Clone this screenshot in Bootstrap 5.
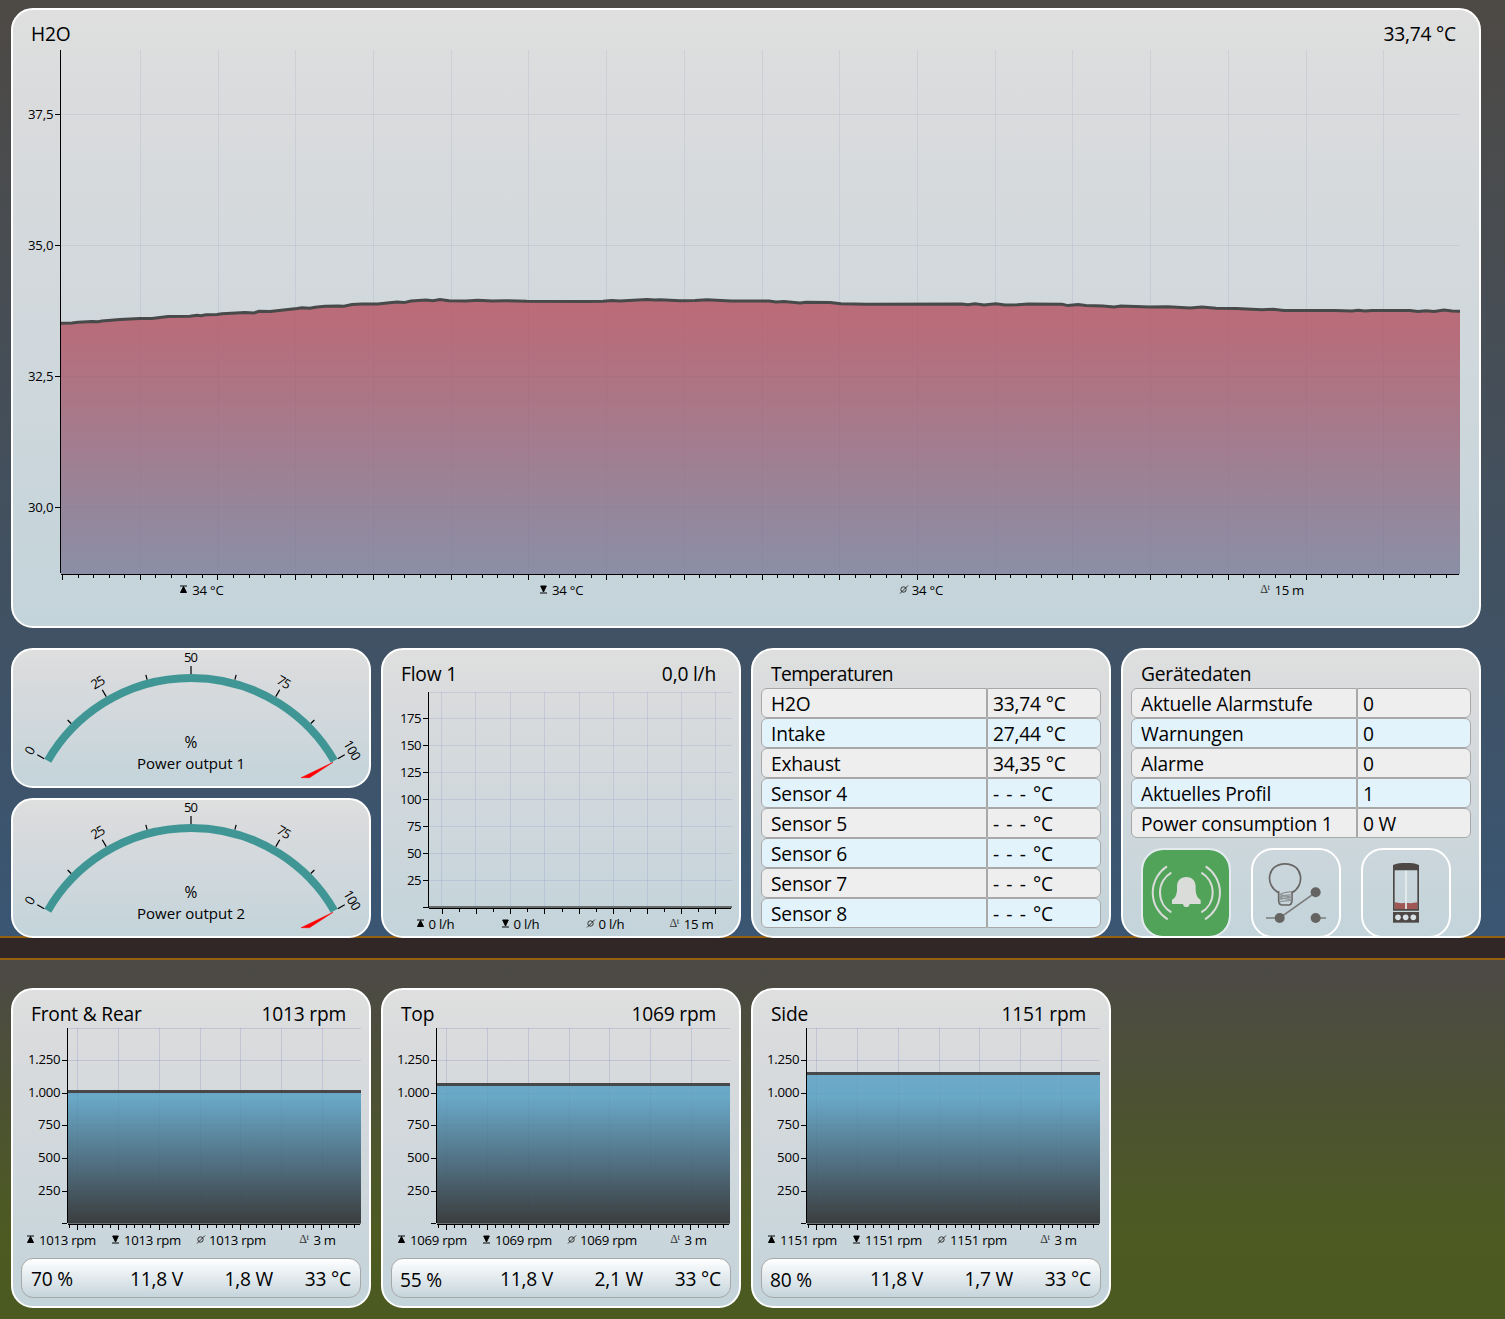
<!DOCTYPE html>
<html lang="de">
<head>
    <meta charset="UTF-8">
    <meta name="viewport" content="width=device-width, initial-scale=1.0">
    <title>H2O Monitor</title>
    <link href="https://cdn.jsdelivr.net/npm/bootstrap@5.3.0/dist/css/bootstrap.min.css" rel="stylesheet">
    <style>
        body {
            background: #312726;
            color: #000;
            font-family: "Open Sans", "Noto Sans", sans-serif;
            font-size: 19.2px;
            letter-spacing: -.2px;
            line-height: 30px;
            overflow: hidden;
        }
        svg { display: block; overflow: visible; }
        svg text { font-family: "Open Sans", "Noto Sans", sans-serif; letter-spacing: 0; }

        .zone { padding-left: 11px; }
        .zone-water {
            height: 938px;
            padding-top: 8px;
            border-bottom: 2px solid #96610f;
            background: linear-gradient(#4d4945, #3a5673);
        }
        .zone-fans {
            height: 361px;
            margin-top: 20px;
            padding-top: 28px;
            border-top: 2px solid #96610f;
            background: linear-gradient(#4c4946, #4d5a22 75%, #4b5a20);
        }

        .panel {
            width: 360px;
            border: 2px solid #fff;
            border-radius: 22px;
            background: linear-gradient(#dedfde, #dadbdd 15%, #cdd7dc 65%, #c3d4da);
        }
        .panel-wide { width: 1470px; height: 620px; }
        .panel-gauge { height: 140px; }
        .panel-std { height: 290px; }
        .panel-fan { height: 320px; }

        .panel-title {
            height: 38px;
            padding: 9px 23px 0 18px;
        }
        .title-tight { letter-spacing: -.6px; }

        .stats {
            display: grid;
            grid-template-columns: repeat(4, 1fr);
            padding: 0 6px 0 10px;
            font-size: 13.2px;
            letter-spacing: -.28px;
            line-height: 16px;
        }
        .stats-wide { padding: 0 18px 0 9px; margin-top: -1px; }
        .stats-fan { padding: 0 10px 0 6px; }
        .stats-left { padding: 0 9px 0 7px; }
        .stats > div { display: flex; justify-content: center; gap: 4px; white-space: nowrap; }
        .stats > div:last-child { gap: 5px; padding-left: 2px; }
        .stats svg { margin-top: 3px; }
        .delta { font-family: "Liberation Serif", serif; font-size: 12px; line-height: 14px; color: #333; letter-spacing: -.5px; }
        .delta sup { font-size: 9px; top: -.3em; }

        .val-table { padding: 0 8px; }
        .val-row > div { height: 30px; border: 1px solid #a8a8a8; background: #eee; white-space: pre; line-height: 30px; }
        .val-row:nth-child(even) > div { background: #e2f3fb; }
        .val-name { width: 226px; padding-left: 9px; border-radius: 6px 0 0 6px; }
        .val-num { width: 114px; padding-left: 5px; border-radius: 0 6px 6px 0; }
        .val-none { word-spacing: 2.6px; }

        /* the last row of tiles is cut at the panel's lower edge */
        .tile-row { height: 88px; overflow: hidden; gap: 20px; padding-left: 18px; margin-top: 10px; }
        .tile {
            width: 90px;
            height: 90px;
            border: 2px solid #fff;
            border-radius: 22px;
            flex: none;
        }
        .tile-alarm { background: #51a359; background-clip: padding-box; border-color: #e3ebee; }

        .info-bar {
            display: grid;
            grid-template-columns: 68px 84px 90px 78px;
            height: 40px;
            margin: 10px 8px 0;
            padding: 5px 9px;
            border: 1px solid #a8a8a8;
            border-radius: 12px;
            background: linear-gradient(#fff, #c5d5dc);
            text-align: right;
            white-space: nowrap;
        }
        .info-bar > :first-child { text-align: left; }
        .nudge > :first-child { margin-left: -1px; padding-top: 1px; }
    </style>
</head>
<body>
<svg width="0" height="0" class="position-absolute">
    <defs>
        <linearGradient id="fill-water" gradientUnits="userSpaceOnUse" x1="0" y1="300" x2="0" y2="574">
            <stop offset="0" stop-color="#bc6b78"/>
            <stop offset=".15" stop-color="#b66e7c"/>
            <stop offset="1" stop-color="#8a8fa6"/>
        </linearGradient>
        <linearGradient id="fill-fan" gradientUnits="userSpaceOnUse" x1="0" y1="1072" x2="0" y2="1223">
            <stop offset="0" stop-color="#6ea9c8"/>
            <stop offset=".17" stop-color="#69a8c7"/>
            <stop offset=".57" stop-color="#537487"/>
            <stop offset="1" stop-color="#3b3e3e"/>
        </linearGradient>
    </defs>
</svg>

<section class="zone zone-water">
    <div class="panel panel-wide">
        <div class="panel-title d-flex justify-content-between">
            <span>H2O</span><span>33,74 °C</span>
        </div>
        <div class="chart" data-chart="water"></div>
        <div class="stats stats-wide" data-max="34 °C" data-span="15 m"></div>
    </div>

    <div class="d-flex" style="gap: 10px; margin-top: 20px">
        <div class="d-flex flex-column" style="gap: 10px">
            <div class="panel panel-gauge" data-gauge="Power output 1"></div>
            <div class="panel panel-gauge" data-gauge="Power output 2"></div>
        </div>

        <div class="panel panel-std">
            <div class="panel-title d-flex justify-content-between">
                <span>Flow 1</span><span>0,0 l/h</span>
            </div>
            <div class="chart" data-chart="flow"></div>
            <div class="stats" data-max="0 l/h" data-span="15 m"></div>
        </div>

        <div class="panel panel-std">
            <div class="panel-title title-tight">Temperaturen</div>
            <div class="val-table">
                <div class="val-row d-flex"><div class="val-name">H2O</div><div class="val-num">33,74 °C</div></div>
                <div class="val-row d-flex"><div class="val-name">Intake</div><div class="val-num">27,44 °C</div></div>
                <div class="val-row d-flex"><div class="val-name">Exhaust</div><div class="val-num">34,35 °C</div></div>
                <div class="val-row d-flex"><div class="val-name">Sensor 4</div><div class="val-num val-none">- - - °C</div></div>
                <div class="val-row d-flex"><div class="val-name">Sensor 5</div><div class="val-num val-none">- - - °C</div></div>
                <div class="val-row d-flex"><div class="val-name">Sensor 6</div><div class="val-num val-none">- - - °C</div></div>
                <div class="val-row d-flex"><div class="val-name">Sensor 7</div><div class="val-num val-none">- - - °C</div></div>
                <div class="val-row d-flex"><div class="val-name">Sensor 8</div><div class="val-num val-none">- - - °C</div></div>
            </div>
        </div>

        <div class="panel panel-std">
            <div class="panel-title">Gerätedaten</div>
            <div class="val-table">
                <div class="val-row d-flex"><div class="val-name">Aktuelle Alarmstufe</div><div class="val-num">0</div></div>
                <div class="val-row d-flex"><div class="val-name">Warnungen</div><div class="val-num">0</div></div>
                <div class="val-row d-flex"><div class="val-name">Alarme</div><div class="val-num">0</div></div>
                <div class="val-row d-flex"><div class="val-name">Aktuelles Profil</div><div class="val-num">1</div></div>
                <div class="val-row d-flex"><div class="val-name">Power consumption 1</div><div class="val-num">0 W</div></div>
            </div>
            <div class="tile-row d-flex">
                <div class="tile tile-alarm">
                    <svg width="86" height="86" viewBox="0 0 258 258">
                        <g fill="none" stroke="#d9dcd9" stroke-width="6">
                            <path d="M72 49A94 94 0 0 0 74 208M85 68A69 69 0 0 0 85 187"/>
                            <path d="M188 49A94 94 0 0 1 186 208M175 68A69 69 0 0 1 175 187"/>
                        </g>
                        <path fill="#d9dcd9" d="M130 81C112 81 102 93 102 110V120C101 135 97 143 87 150V162H173V150C163 143 159 135 158 120V110C158 93 148 81 130 81Z"/>
                        <path fill="#d9dcd9" d="M120 161q1 10 10 10t10-10z"/>
                    </svg>
                </div>
                <div class="tile">
                    <svg width="86" height="86" viewBox="0 0 258 258">
                        <g fill="none" stroke="#686664" stroke-width="5">
                            <path d="M77 128C36 108 40 42 96 41.500C152 42 156 108 117 128"/>
                            <path d="M77 124V150Q77 164 86 165H108Q117 164 117 150V124"/>
                        </g>
                        <path fill="none" stroke="#8d9193" stroke-width="3.500" d="M78 134Q98 124 117 126M78 142Q98 134 117 134M78 149Q98 142 117 143M79 156Q98 151 116 152M78 134L117 142M78 142L117 150"/>
                        <path fill="none" stroke="#7c7b7a" stroke-width="5" d="M39 204H80L188 127M188 204H219"/>
                        <g fill="#666462">
                            <circle cx="80" cy="204" r="15"/>
                            <circle cx="188" cy="127" r="15"/>
                            <circle cx="188" cy="204" r="15"/>
                        </g>
                    </svg>
                </div>
                <div class="tile">
                    <svg width="86" height="86" viewBox="0 0 258 258">
                        <path fill="#a15656" d="M95 157l20 3 14-2 14 2 20-3v22H95z"/>
                        <path fill="#e6edf0" opacity=".85" d="M126 60h6v117h-6z"/>
                        <path fill="none" stroke="#4d4846" stroke-width="5" d="M92.500 58V179.500H165.500V58"/>
                        <path fill="#4d4846" d="M90 61V45Q104 39 117 39H142Q155 39 168 45V61Z"/>
                        <path fill="#4d4846" d="M90 186H168V218H90Z"/>
                        <g fill="#d7e1e6">
                            <circle cx="105" cy="202" r="8.500"/>
                            <circle cx="128" cy="202" r="8.500"/>
                            <circle cx="151" cy="202" r="8.500"/>
                        </g>
                    </svg>
                </div>
            </div>
        </div>
    </div>
</section>

<section class="zone zone-fans">
    <div class="d-flex" style="gap: 10px">
        <div class="panel panel-fan">
            <div class="panel-title d-flex justify-content-between">
                <span>Front &amp; Rear</span><span>1013 rpm</span>
            </div>
            <div class="chart" data-chart="fan" data-top="1091.5" data-shift="0"></div>
            <div class="stats stats-fan" data-max="1013 rpm" data-span="3 m"></div>
            <div class="info-bar"><span>70 %</span><span>11,8 V</span><span>1,8 W</span><span>33 °C</span></div>
        </div>
        <div class="panel panel-fan">
            <div class="panel-title d-flex justify-content-between">
                <span>Top</span><span>1069 rpm</span>
            </div>
            <div class="chart" data-chart="fan" data-top="1084.5" data-shift="-1"></div>
            <div class="stats stats-left" data-max="1069 rpm" data-span="3 m"></div>
            <div class="info-bar nudge"><span>55 %</span><span>11,8 V</span><span>2,1 W</span><span>33 °C</span></div>
        </div>
        <div class="panel panel-fan">
            <div class="panel-title d-flex justify-content-between">
                <span>Side</span><span>1151 rpm</span>
            </div>
            <div class="chart" data-chart="fan" data-top="1073.5" data-shift="-1"></div>
            <div class="stats stats-left" data-max="1151 rpm" data-span="3 m"></div>
            <div class="info-bar nudge"><span>80 %</span><span>11,8 V</span><span>1,7 W</span><span>33 °C</span></div>
        </div>
    </div>
</section>

<script src="https://cdn.jsdelivr.net/npm/bootstrap@5.3.0/dist/js/bootstrap.bundle.min.js"></script>
<script>
    const WATER = [[61,323.300],[72,323],[78,322.200],[92,321.600],[98,321.800],[102,321],[120,319.500],[140,318.500],[152,318.400],[168,316.400],
        [190,316.200],[197,315.300],[201,315.800],[206,314.800],[217,314.600],[222,313.800],[245,312.500],[254,312.900],[259,311.300],[270,311.400],
        [297,308.500],[302,307.800],[310,308.200],[315,307.200],[325,306.300],[338,306],[344,306.200],[352,304.600],[362,304],[378,304],[387,303],
        [397,302],[404,302.600],[411,301],[426,300],[433,300.700],[440,299.600],[449,300.700],[466,301],[478,300.300],[492,301],[505,300.700],[527,301.300],
        [587,301.400],[603,301.200],[612,300.500],[620,301],[647,299.600],[655,300],[660,299.700],[680,300.700],[695,300.600],[707,299.800],[731,301],
        [751,301],[769,301],[776,302],[784,301.500],[800,303],[806,302.300],[830,302.500],[841,303.700],[867,304.200],[962,304],[968,304.700],
        [975,303.800],[984,305],[996,303.800],[1005,305],[1018,304.800],[1028,304],[1062,304.300],[1068,305.600],[1078,304.600],[1086,305.600],
        [1103,305.900],[1114,307],[1121,306],[1150,307],[1168,306.800],[1190,308],[1202,307],[1216,308.200],[1236,308.600],[1262,309.800],
        [1273,309.300],[1284,310.400],[1335,310.500],[1352,310.900],[1358,310.300],[1365,311],[1372,310.400],[1410,310.400],[1418,311.400],
        [1426,310.700],[1434,311.500],[1444,309.900],[1452,310.900],[1460,311.300]];

    function lineH(x1, x2, y, color, w = 1) {
        return `<rect x="${x1}" y="${y}" width="${x2 - x1}" height="${w}" fill="${color}"/>`;
    }
    function lineV(x, y1, y2, color, w = 1) {
        return `<rect x="${x}" y="${y1}" width="${w}" height="${y2 - y1}" fill="${color}"/>`;
    }

    // ticks: [first, step, end, every n-th is long, index of the first long one]
    function drawChart(el, c) {
        let s = '';
        c.gridY.forEach(y => s += lineH(c.left + 1, c.right, y, c.grid));
        c.gridX.forEach(x => s += lineV(Math.floor(x), c.top, c.bottom, c.grid));
        s += c.body;
        if (c.overlay) {
            c.gridY.forEach(y => s += lineH(c.left + 1, c.right, y, c.overlay));
            c.gridX.forEach(x => s += lineV(Math.floor(x), c.top, c.bottom, c.overlay));
        }
        s += lineV(c.left, c.top, c.bottom, '#000');
        s += lineH(c.left + 1, c.right - 1, c.axisY, '#000');
        const [first, step, end, every, offset] = c.ticks;
        steps(first, step, end).forEach((x, i) => {
            s += lineV(Math.round(x), c.axisY, c.axisY + (i % every === offset ? 6 : 4), '#000');
        });
        c.labels.forEach(([t, y, w]) => {
            s += lineH(c.left - 5, c.left, y, '#000');
            if (t) s += `<text x="${c.left - 6.500}" y="${y + c.textDy}" text-anchor="end" font-size="13.2" textLength="${w}">${t}</text>`;
        });
        el.innerHTML = `<svg width="${c.box[2]}" height="${c.box[3]}" viewBox="${c.box.join(' ')}">${s}</svg>`;
    }

    function steps(start, step, end) {
        const out = [];
        for (let x = start; x < end; x += step) out.push(x);
        return out;
    }

    const charts = {
        water() {
            const pts = WATER.map(p => p.join(' ')).join('L');
            return {
                box: [13, 48, 1466, 535], left: 60, right: 1460, top: 50, bottom: 573, axisY: 574, textDy: 5,
                grid: 'rgba(110,110,170,.06)', overlay: 'rgba(60,60,110,.035)',
                gridY: [114, 245, 376, 507],
                gridX: steps(140.3, 77.72, 1400),
                ticks: [62, 15.545, 1458, 5, 0],
                labels: [['37,5', 114, 25.5], ['35,0', 245, 25.5], ['32,5', 376, 25.5], ['30,0', 507, 25.5]],
                body: `<path d="M${pts}L1460 574L61 574Z" fill="url(#fill-water)"/>
                       <path d="M${pts}" fill="none" stroke="#484949" stroke-width="3"/>`
            };
        },
        flow() {
            return {
                box: [383, 688, 356, 228], left: 428, right: 732, top: 692, bottom: 908, axisY: 908, textDy: 5,
                grid: 'rgba(130,130,205,.21)',
                gridY: [692, 718, 745, 772, 799, 826, 853, 880],
                gridX: [441, 475, 510, 544, 579, 613, 647, 681, 715],
                ticks: [442, 17.08, 720, 2, 0],
                labels: [['175', 718, 21.5], ['150', 745, 21.5], ['125', 772, 21.5], ['100', 799, 21.5], ['75', 826, 14.5], ['50', 853, 14.5], ['25', 880, 14.5], ['', 907]],
                body: lineH(429, 732, 906, '#686969', 2)
            };
        },
        fan(el) {
            const y = +el.dataset.top, dx = +el.dataset.shift;
            return {
                box: [13 - dx, 1028, 356, 204], left: 67, right: 361, top: 1028, bottom: 1223, axisY: 1224, textDy: 4,
                grid: 'rgba(140,130,215,.2)', overlay: 'rgba(40,40,80,.04)',
                gridY: [1028, 1060, 1093, 1125, 1158, 1191],
                gridX: [77, 118, 159, 200, 240, 281, 322],
                ticks: [69, 8.14, 358, 5, 1],
                labels: [['1.250', 1060, 32.5], ['1.000', 1093, 32.5], ['750', 1125, 22.5], ['500', 1158, 22.5], ['250', 1191, 22.5], ['', 1223]],
                body: `<rect x="68" y="${y}" width="293" height="${1223 - y}" fill="url(#fill-fan)"/>` + lineH(68, 361, 1223, '#6b7578') + lineH(68, 361, y - 1.5, '#474849', 3)
            };
        }
    };
    document.querySelectorAll('[data-chart]').forEach(el => drawChart(el, charts[el.dataset.chart](el)));

    // min / max / average / interval line under each chart
    document.querySelectorAll('.stats').forEach(el => {
        const v = el.dataset.max;
        const icons = [
            '<path d="M0 1h7M3.500 1.500L6.500 7.500H.5z" stroke="#000" stroke-width="1"/>',
            '<path d="M0 8h7M3.500 7L6.300 1H.7z" stroke="#000" stroke-width="1"/>',
            '<circle cx="3.500" cy="4.500" r="2.700" fill="none" stroke="#222" stroke-width=".9"/><path d="M0 8.500L8 .5" stroke="#222" stroke-width=".9"/>'
        ];
        el.innerHTML = icons.map(i => `<div><svg width="8" height="9">${i}</svg><span>${v}</span></div>`).join('') +
            `<div><span class="delta">Δ<sup>t</sup></span><span>${el.dataset.span}</span></div>`;
    });

    document.querySelectorAll('[data-gauge]').forEach(el => {
        const cx = 191, cy = 843.4;
        const at = (r, deg) => [cx + r * Math.sin(deg * Math.PI / 180), cy - r * Math.cos(deg * Math.PI / 180)];
        let s = `<path d="M${at(165.400, -60)}A165.400 165.400 0 0 1 ${at(165.400, 60)}" fill="none" stroke="#409695" stroke-width="8"/>`;
        for (let i = 0; i <= 8; i++) {
            const deg = -60 + i * 15;
            s += `<path d="M${at(169.500, deg)}L${at(i % 2 ? 174.500 : 177.500, deg)}" stroke="#000" stroke-width="1.200"/>`;
            if (i % 2 === 0) {
                const [x, y] = at(186, deg);
                const t = i * 12.5;
                s += `<text x="${x}" y="${y}" dy="4.500" font-size="13" text-anchor="middle" textLength="${7 * String(t).length}" transform="rotate(${deg} ${x} ${y})">${t}</text>`;
            }
        }
        s += '<path d="M333 762.300L301 777.700H309.500Z" fill="#f00" stroke="#f00" stroke-width=".5"/>';
        s += '<text x="191" y="748" font-size="15.5" text-anchor="middle">%</text>';
        s += `<text x="191" y="769" font-size="15" text-anchor="middle" textLength="108">${el.dataset.gauge}</text>`;
        el.innerHTML = `<svg width="356" height="136" viewBox="13 650 356 136">${s}</svg>`;
    });
</script>
</body>
</html>
